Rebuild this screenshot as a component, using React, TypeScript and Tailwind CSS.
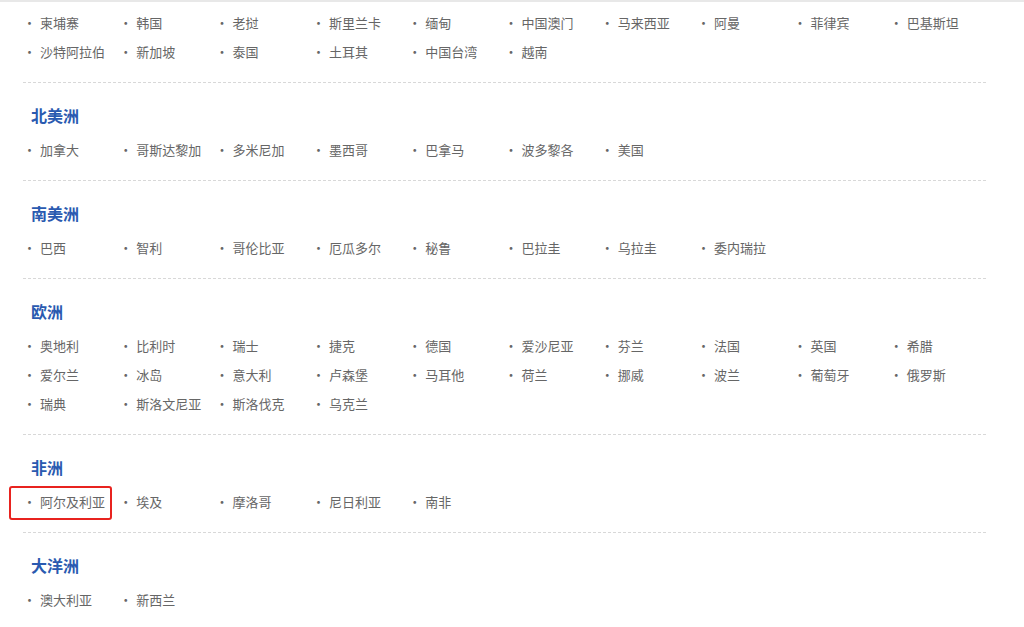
const SECTIONS: { title?: string; items: string[] }[] = [
  { items: ["柬埔寨", "韩国", "老挝", "斯里兰卡", "缅甸", "中国澳门", "马来西亚", "阿曼", "菲律宾", "巴基斯坦", "沙特阿拉伯", "新加坡", "泰国", "土耳其", "中国台湾", "越南"] },
  { title: "北美洲", items: ["加拿大", "哥斯达黎加", "多米尼加", "墨西哥", "巴拿马", "波多黎各", "美国"] },
  { title: "南美洲", items: ["巴西", "智利", "哥伦比亚", "厄瓜多尔", "秘鲁", "巴拉圭", "乌拉圭", "委内瑞拉"] },
  { title: "欧洲", items: ["奥地利", "比利时", "瑞士", "捷克", "德国", "爱沙尼亚", "芬兰", "法国", "英国", "希腊", "爱尔兰", "冰岛", "意大利", "卢森堡", "马耳他", "荷兰", "挪威", "波兰", "葡萄牙", "俄罗斯", "瑞典", "斯洛文尼亚", "斯洛伐克", "乌克兰"] },
  { title: "非洲", items: ["阿尔及利亚", "埃及", "摩洛哥", "尼日利亚", "南非"] },
  { title: "大洋洲", items: ["澳大利亚", "新西兰"] },
];

export default function App() {
  return (
    <div className="relative h-[627px] w-[1024px] overflow-hidden bg-white" style={{ fontFamily: '"Noto Sans CJK SC", "Liberation Sans", sans-serif' }}>
      <div className="h-[2px] bg-[#e8e8e8]" />
      <div className="ml-[23px] w-[963px]">
        {SECTIONS.map((s, i) => (
          <div key={i} className={i > 0 ? "border-t border-dashed border-[#d8d8d8] pt-[23px]" : "pt-[6px]"}>
            {s.title && (
              <h2 className="mb-[9px] ml-[8px] h-[20px] text-[16px] font-bold leading-[18px] text-[#2a5ab0]">{s.title}</h2>
            )}
            <div className="grid grid-cols-10 pb-[16px]">
              {s.items.map((it) => (
                <div key={it} className="relative flex h-[29px] items-center text-[13px] leading-[29px] text-[#666]">
                  <span className="mr-[4px] font-['Liberation_Sans',sans-serif]">·</span>
                  {it}
                  {it === "阿尔及利亚" && (
                    <div className="absolute -top-[1px] -left-[14px] h-[34px] w-[103px] rounded-[3px] border-2 border-[#e8231f]" />
                  )}
                </div>
              ))}
            </div>
          </div>
        ))}
      </div>
    </div>
  );
}
